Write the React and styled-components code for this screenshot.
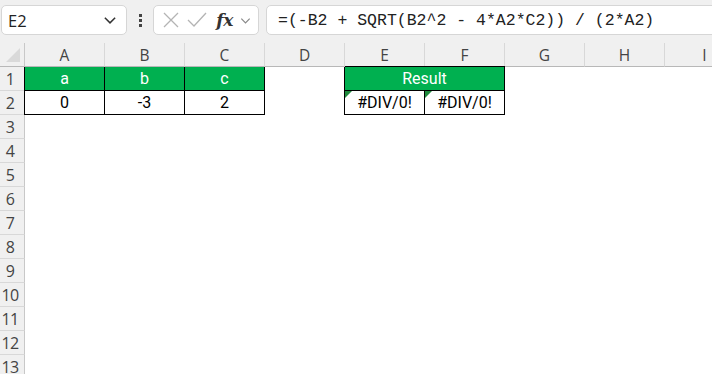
import React from "react"
import styled, { createGlobalStyle, css } from "styled-components"

const GlobalStyle = createGlobalStyle`
  html, body {
    margin: 0;
    padding: 0;
    background: #fff;
    overflow: hidden;
  }
  * {
    box-sizing: border-box;
  }
`

const Page = styled.div`
  width: 712px;
  height: 374px;
  overflow: hidden;
  background: #fff;
`

const TopBar = styled.div`
  height: 43px;
  background: #f0f0f0;
  display: flex;
  align-items: flex-start;
  padding: 5px 0 0 1px;
`

const Box = styled.div`
  height: 30px;
  background: #fff;
  border: 1px solid #d6d6d6;
  border-radius: 5px;
  display: flex;
  align-items: center;
`

const NameBox = styled(Box)`
  width: 126px;
  padding: 0 8px 0 6px;
  justify-content: space-between;
  font-family: "Open Sans", "Noto Sans", sans-serif;
  font-size: 16.5px;
  color: #222;
`

const Dots = styled.div`
  width: 26px;
  display: flex;
  flex-direction: column;
  align-items: center;
  gap: 2px;
  padding-top: 9px;

  span {
    width: 3px;
    height: 3px;
    background: #444;
  }
`

const FxBox = styled(Box)`
  width: 106px;
  padding: 0 6px 0 8px;
  justify-content: space-between;
`

const FxText = styled.span`
  font-family: "DejaVu Serif", "Liberation Serif", serif;
  font-style: italic;
  font-weight: bold;
  font-size: 17px;
  color: #333;
  letter-spacing: -0.5px;
  margin-left: 2px;
`

const FormulaBox = styled(Box)`
  flex: 1;
  margin-left: 7px;
  margin-right: -20px;
  padding-left: 11px;
  font-family: "Liberation Mono", "DejaVu Sans Mono", monospace;
  font-size: 16.5px;
  color: #222;
  white-space: pre;
`

const Grid = styled.div`
  display: grid;
  grid-template-columns: 25px repeat(9, 80px);
  grid-auto-rows: 24px;
`

const Corner = styled.div`
  background: #f0f0f0;
  border-right: 1px solid #c8c8c8;
  border-bottom: 1px solid #b8b8b8;
  position: relative;

  &::after {
    content: "";
    position: absolute;
    right: 4px;
    bottom: 4px;
    border-left: 14px solid transparent;
    border-bottom: 14px solid #d9d9d9;
  }
`

const ColHead = styled.div`
  background: #f0f0f0;
  border-right: 1px solid #d8d8d8;
  border-bottom: 1px solid #b8b8b8;
  display: flex;
  align-items: center;
  justify-content: center;
  font-family: "Open Sans", "Noto Sans", sans-serif;
  font-size: 15.5px;
  color: #444;
  padding-top: 1px;
`

const RowHead = styled.div`
  background: #f0f0f0;
  border-right: 1px solid #c8c8c8;
  border-bottom: 1px solid #d8d8d8;
  display: flex;
  align-items: center;
  justify-content: center;
  font-family: "Open Sans", "Noto Sans", sans-serif;
  font-size: 16px;
  color: #444;
  padding-right: 4px;
  letter-spacing: -0.6px;
  white-space: nowrap;
`

const Cell = styled.div`
  position: relative;
  display: flex;
  align-items: center;
  justify-content: center;
  font-family: Roboto, "Liberation Sans", sans-serif;
  font-size: 16px;
  color: #000;
  grid-column: span ${(p) => p.$span || 1};

  ${(p) =>
    p.$boxed &&
    css`
      border-right: 1px solid #000;
      border-bottom: 1px solid #000;
    `}
  ${(p) =>
    p.$left &&
    css`
      box-shadow: -1px 0 0 #000;
    `}
  ${(p) =>
    p.$top &&
    css`
      box-shadow: -1px 0 0 #000, 0 -1px 0 #000;
    `}
  ${(p) =>
    p.$head &&
    css`
      background: #00b050;
      color: #fff;
    `}
  ${(p) =>
    p.$error &&
    css`
      &::before {
        content: "";
        position: absolute;
        left: 0;
        top: 0;
        border-top: 7px solid #1f8a3c;
        border-right: 7px solid transparent;
      }
    `}
`

const cols = ["A", "B", "C", "D", "E", "F", "G", "H", "I"]

const Chevron = ({ color = "#333", size = 14 }) => (
  <svg width={size} height={size} viewBox="0 0 14 14" fill="none">
    <path d="M2.5 5l4.5 4.5L11.5 5" stroke={color} strokeWidth="1.3" />
  </svg>
)

const App = () => {
  const rows = Array.from({ length: 13 }, (_, i) => i + 1)

  const renderRow = (r) => {
    if (r === 1) {
      return (
        <>
          <Cell $boxed $head $left>a</Cell>
          <Cell $boxed $head>b</Cell>
          <Cell $boxed $head>c</Cell>
          <Cell />
          <Cell $boxed $head $top $span={2}>Result</Cell>
          <Cell />
          <Cell />
          <Cell />
        </>
      )
    }
    if (r === 2) {
      return (
        <>
          <Cell $boxed $left>0</Cell>
          <Cell $boxed>-3</Cell>
          <Cell $boxed>2</Cell>
          <Cell />
          <Cell $boxed $left $error>#DIV/0!</Cell>
          <Cell $boxed $error>#DIV/0!</Cell>
          <Cell />
          <Cell />
          <Cell />
        </>
      )
    }
    return cols.map((c) => <Cell key={c} />)
  }

  return (
    <Page>
      <GlobalStyle />
      <TopBar>
        <NameBox>
          <span>E2</span>
          <Chevron size={16} />
        </NameBox>
        <Dots>
          <span />
          <span />
          <span />
        </Dots>
        <FxBox>
          <svg width="18" height="18" viewBox="0 0 18 18" fill="none">
            <path d="M2 2l14 14M16 2L2 16" stroke="#b4b4b4" strokeWidth="1.3" />
          </svg>
          <svg width="22" height="18" viewBox="0 0 22 18" fill="none">
            <path d="M2 9l6 6L20 2" stroke="#b4b4b4" strokeWidth="1.3" />
          </svg>
          <FxText>fx</FxText>
          <Chevron color="#888" size={13} />
        </FxBox>
        <FormulaBox>=(-B2 + SQRT(B2^2 - 4*A2*C2)) / (2*A2)</FormulaBox>
      </TopBar>
      <Grid>
        <Corner />
        {cols.map((c) => (
          <ColHead key={c}>{c}</ColHead>
        ))}
        {rows.map((r) => (
          <React.Fragment key={r}>
            <RowHead>{r}</RowHead>
            {renderRow(r)}
          </React.Fragment>
        ))}
      </Grid>
    </Page>
  )
}

export default App
